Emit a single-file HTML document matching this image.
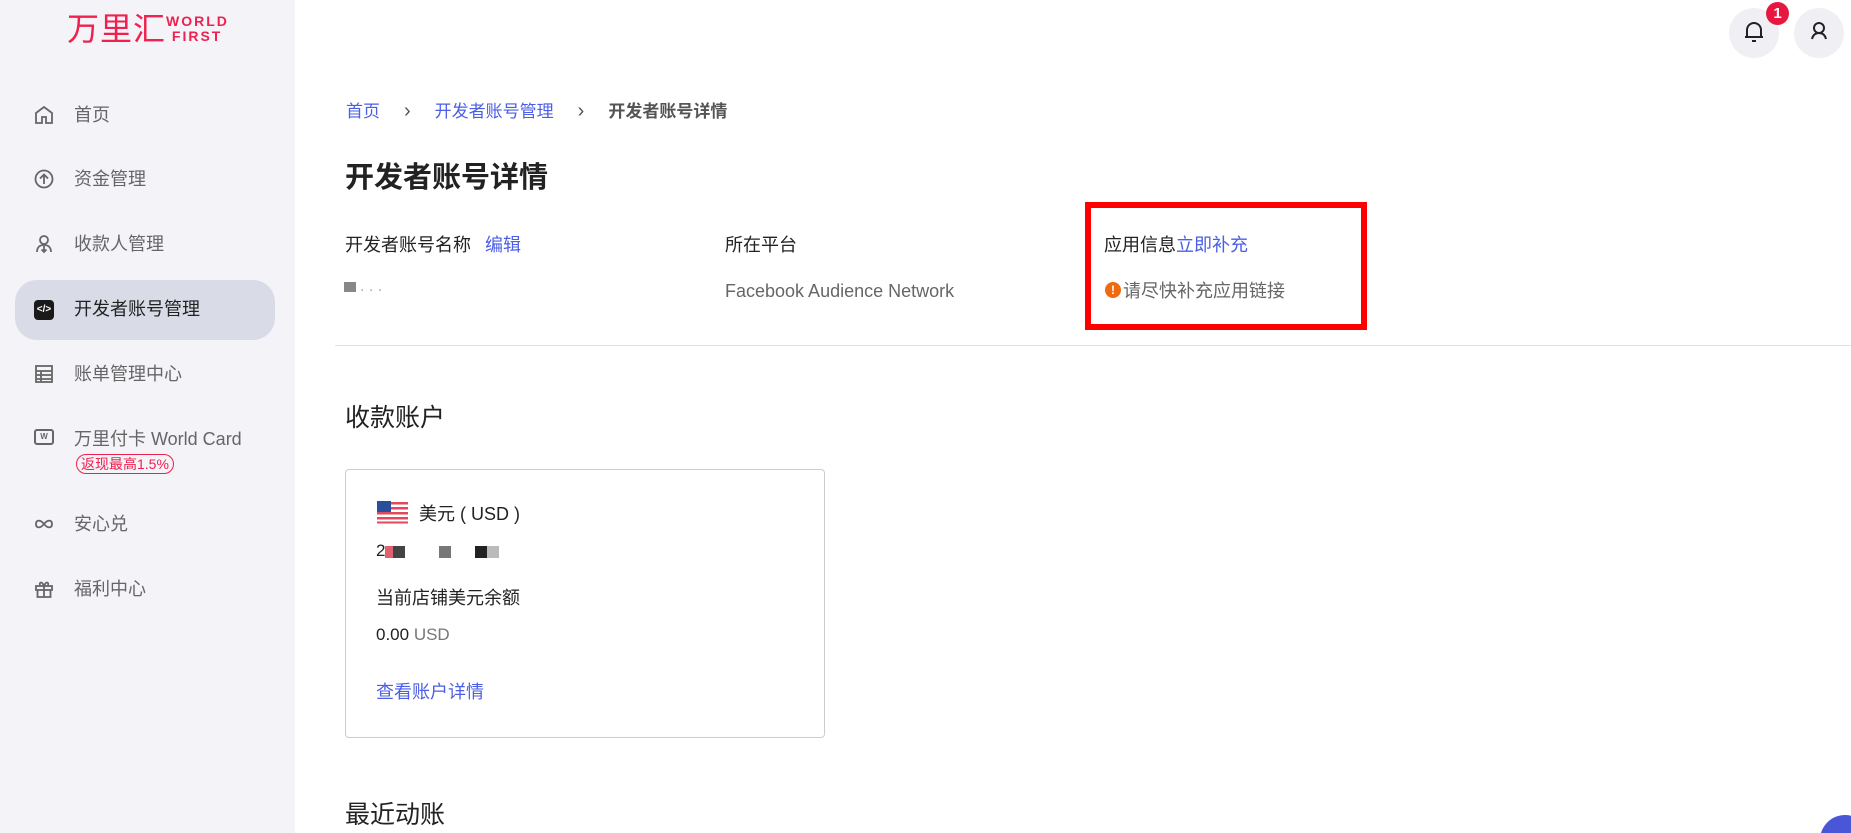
<!DOCTYPE html>
<html style="overflow:hidden"><head><meta charset="utf-8"><style>
*{margin:0;padding:0;box-sizing:border-box}
html,body{width:1851px;height:833px;overflow:hidden}
body{background:#fff;font-family:"Liberation Sans","Noto Sans CJK SC",sans-serif;position:relative;color:#222}
.abs{position:absolute;white-space:nowrap}
#side{position:absolute;left:0;top:0;width:295px;height:833px;background:#f3f3f8}
.nav{position:absolute;left:74px;font-size:18px;color:#666;line-height:24px}
.ic{position:absolute;left:34px;width:20px;height:20px}
.lnk{color:#4b5ee6}
</style></head><body>
<div id="side">
 <div class="abs" style="left:67px;top:10px;font-size:32px;color:#f0204f;letter-spacing:1px;line-height:38px">万里汇</div>
 <div class="abs" style="left:166px;top:14px;font-size:14px;color:#f0204f;font-weight:bold;letter-spacing:2px;line-height:15px">WORLD<br>&nbsp;FIRST</div>
 <div style="position:absolute;left:15px;top:280px;width:260px;height:60px;border-radius:22px;background:#d9dbe7"></div>
 <svg class="ic" style="top:105px" viewBox="0 0 20 20" fill="none" stroke="#666" stroke-width="1.8"><path d="M2 18V8l8-6 8 6v10h-6v-6H8v6z"/></svg>
 <div class="nav" style="top:103px">首页</div>
 <svg class="ic" style="top:169px" viewBox="0 0 20 20" fill="none" stroke="#666" stroke-width="1.8"><circle cx="10" cy="10" r="8.5"/><path d="M10 15V6M6 9.5l4-4 4 4"/></svg>
 <div class="nav" style="top:167px">资金管理</div>
 <svg class="ic" style="top:234px" viewBox="0 0 20 20" fill="none" stroke="#666" stroke-width="1.8"><circle cx="10" cy="6" r="4"/><path d="M3 18c0-5 3-7 7-7s7 2 7 7M10 12v6M7.5 15.5l2.5 2.5 2.5-2.5"/></svg>
 <div class="nav" style="top:232px">收款人管理</div>
 <div class="ic" style="top:300px;background:#1a1a1a;border-radius:4px;color:#fff;font-size:10px;font-weight:bold;text-align:center;line-height:20px">&lt;/&gt;</div>
 <div class="nav" style="top:297px;color:#222">开发者账号管理</div>
 <svg class="ic" style="top:364px" viewBox="0 0 20 20" fill="none" stroke="#666" stroke-width="1.8"><rect x="2" y="2" width="16" height="16"/><path d="M2 7h16M2 11h16M2 15h16M7 7v11"/></svg>
 <div class="nav" style="top:362px">账单管理中心</div>
 <div class="ic" style="top:429px;height:16px;border:2px solid #666;border-radius:3px;font-size:8px;font-weight:bold;color:#666;text-align:center;line-height:12px">W</div>
 <div class="nav" style="top:427px">万里付卡 World Card</div>
 <div class="abs" style="left:76px;top:454px;height:20px;padding:0 4px;border:1px solid #f0204f;border-radius:10px;color:#f0204f;font-size:14px;line-height:18px">返现最高1.5%</div>
 <svg class="ic" style="top:514px" viewBox="0 0 20 20" fill="none" stroke="#666" stroke-width="1.8"><path d="M2 10c0-4 4-5 8 0s8 4 8 0-4-5-8 0-8 4-8 0z"/></svg>
 <div class="nav" style="top:512px">安心兑</div>
 <svg class="ic" style="top:579px" viewBox="0 0 20 20" fill="none" stroke="#666" stroke-width="1.8"><rect x="2" y="7" width="16" height="4"/><path d="M3.5 11v7h13v-7M10 7v11M10 7C8 2 5 3 6 6M10 7c2-5 5-4 4-1"/></svg>
 <div class="nav" style="top:577px">福利中心</div>
</div>

<div style="position:absolute;left:1729px;top:8px;width:50px;height:50px;border-radius:50%;background:#f0f0f4"></div>
<svg class="abs" style="left:1743px;top:20px" width="22" height="24" viewBox="0 0 22 24" fill="none" stroke="#222" stroke-width="2"><path d="M4 17V10a7 7 0 0 1 14 0v7M2 17h18M9 21h4"/></svg>
<div class="abs" style="left:1766px;top:2px;width:23px;height:23px;border-radius:50%;background:#e8173f;color:#fff;font-size:15px;font-weight:bold;text-align:center;line-height:23px">1</div>
<div style="position:absolute;left:1794px;top:8px;width:50px;height:50px;border-radius:50%;background:#f0f0f4"></div>
<svg class="abs" style="left:1808px;top:20px" width="22" height="22" viewBox="0 0 22 22" fill="none" stroke="#222" stroke-width="2"><path d="M4 19c1-4 3-6 7-6s6 2 7 6"/><circle cx="11" cy="8" r="5"/></svg>

<div class="abs" style="left:346px;top:100px;font-size:17px;line-height:22px"><span class="lnk">首页</span><span style="color:#555;margin:0 24px;font-size:20px">&#x203A;</span><span class="lnk">开发者账号管理</span><span style="color:#555;margin:0 24px;font-size:20px">&#x203A;</span><b style="color:#555">开发者账号详情</b></div>
<div class="abs" style="left:345px;top:160px;font-size:29px;font-weight:bold;line-height:36px">开发者账号详情</div>
<div class="abs" style="left:345px;top:233px;font-size:18px;line-height:24px">开发者账号名称<span class="lnk" style="margin-left:14px">编辑</span></div>
<div class="abs" style="left:725px;top:233px;font-size:18px;line-height:24px">所在平台</div>
<div class="abs" style="left:1104px;top:233px;font-size:18px;line-height:24px">应用信息<span class="lnk">立即补充</span></div>
<div class="abs" style="left:344px;top:282px;width:12px;height:10px;background:#888"></div>
<div class="abs" style="left:360px;top:278px;font-size:16px;color:#aaa">. . .</div>
<div class="abs" style="left:725px;top:279px;font-size:18px;color:#666;line-height:24px">Facebook Audience Network</div>
<div class="abs" style="left:1105px;top:282px;width:16px;height:16px;border-radius:50%;background:#f06a0f;color:#fff;font-size:12px;font-weight:bold;text-align:center;line-height:16px">!</div>
<div class="abs" style="left:1123px;top:279px;font-size:18px;color:#666;line-height:24px">请尽快补充应用链接</div>
<div style="position:absolute;left:1085px;top:202px;width:282px;height:128px;border:6px solid #ff0000"></div>
<div style="position:absolute;left:335px;top:345px;width:1516px;height:1px;background:#e0e0ec"></div>

<div class="abs" style="left:345px;top:403px;font-size:25px;line-height:30px">收款账户</div>
<div style="position:absolute;left:345px;top:469px;width:480px;height:269px;border:1px solid #ccc;border-radius:4px"></div>
<svg class="abs" style="left:377px;top:501px" width="31" height="23" viewBox="0 0 31 23"><rect width="31" height="23" rx="3" fill="#fff"/><g fill="#e04a5a"><rect y="1" width="31" height="2.5"/><rect y="6" width="31" height="2.5"/><rect y="11" width="31" height="2.5"/><rect y="16" width="31" height="2.5"/><rect y="20.5" width="31" height="2"/></g><rect width="14" height="11" fill="#2a4f9a"/></svg>
<div class="abs" style="left:419px;top:502px;font-size:18px;line-height:24px">美元 ( USD )</div>
<div class="abs" style="left:376px;top:540px;font-size:17px;line-height:22px">2</div>
<div class="abs" style="left:385px;top:546px;width:9px;height:12px;background:#e06070"></div>
<div class="abs" style="left:393px;top:546px;width:12px;height:12px;background:#444"></div>
<div class="abs" style="left:439px;top:546px;width:12px;height:12px;background:#777"></div>
<div class="abs" style="left:475px;top:546px;width:12px;height:12px;background:#222"></div>
<div class="abs" style="left:487px;top:546px;width:12px;height:12px;background:#bbb"></div>
<div class="abs" style="left:376px;top:586px;font-size:18px;line-height:24px">当前店铺美元余额</div>
<div class="abs" style="left:376px;top:624px;font-size:17px;line-height:22px">0.00 <span style="color:#777">USD</span></div>
<div class="abs lnk" style="left:376px;top:680px;font-size:18px;line-height:24px">查看账户详情</div>
<div class="abs" style="left:345px;top:800px;font-size:25px;line-height:30px">最近动账</div>
<div style="position:absolute;left:1820px;top:815px;width:31px;height:18px;overflow:hidden"><div style="width:50px;height:50px;border-radius:50%;background:#4a56d8"></div></div>
</body></html>
